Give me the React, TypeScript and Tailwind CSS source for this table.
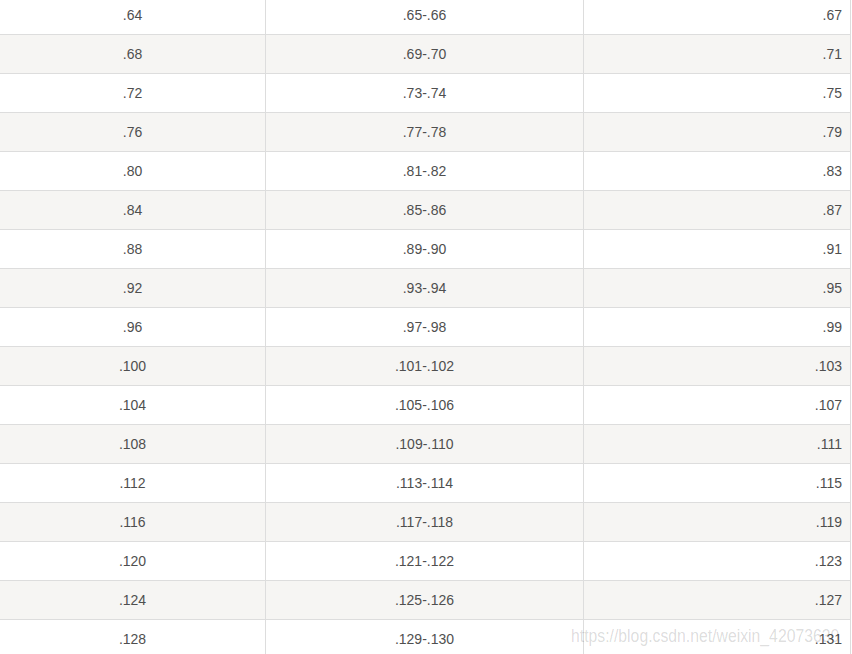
const rows = Array.from({ length: 17 }, (_, i) => {
  const base = 64 + i * 4;
  return {
    left: `.${base}`,
    middle: `.${base + 1}-.${base + 2}`,
    right: `.${base + 3}`,
  };
});

export default function App() {
  return (
    <div className="relative h-[654px] w-[852px] overflow-hidden bg-white font-['Liberation_Sans',Arial,sans-serif] text-[14px] text-[#4f4f4f]">
      <div className="-mt-[4px] grid grid-cols-[266px_318px_267px]">
        {rows.map((row, i) => {
          const bg = i % 2 === 1 ? "bg-[#f6f5f3]" : "bg-white";
          return (
            <div key={row.left} className="contents">
              <div
                className={`flex h-[39px] items-center justify-center border-r border-b border-[#dddddd] ${bg}`}
              >
                {row.left}
              </div>
              <div
                className={`flex h-[39px] items-center justify-center border-r border-b border-[#dddddd] ${bg}`}
              >
                {row.middle}
              </div>
              <div
                className={`flex h-[39px] items-center justify-end border-r border-b border-[#dddddd] pr-[8px] ${bg}`}
              >
                {row.right}
              </div>
            </div>
          );
        })}
      </div>

      {/* csdn watermark */}
      <div className="pointer-events-none absolute left-[571px] top-[624px] origin-left scale-x-[0.83] whitespace-nowrap text-[19px] leading-[24px] text-black/15">
        https://blog.csdn.net/weixin_42073630
      </div>
    </div>
  );
}
